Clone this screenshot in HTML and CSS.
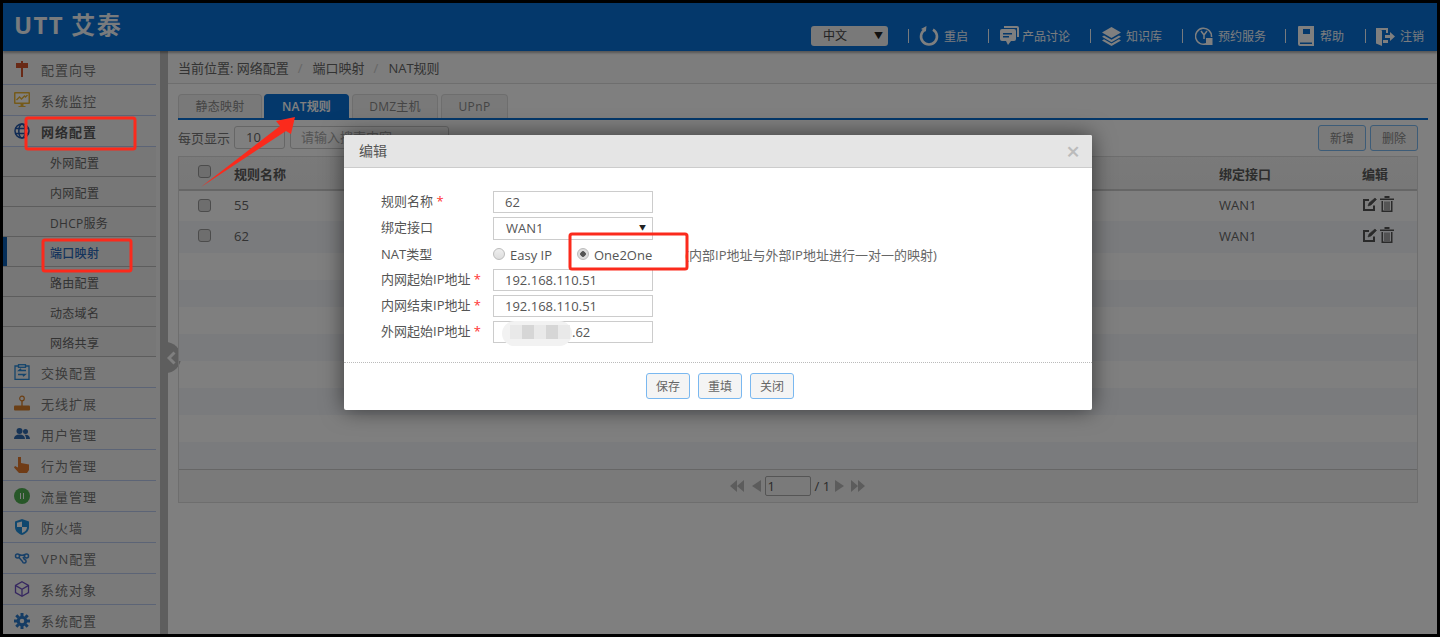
FILE: index.html
```html
<!DOCTYPE html>
<html lang="zh-CN">
<head>
    <meta charset="UTF-8">
    <meta name="viewport" content="width=device-width, initial-scale=1.0">
    <title>UTT 艾泰 - NAT规则</title>
    <link rel="stylesheet" href="styles.css">
</head>
<body>
<div class="app">
    <header class="topbar">
        <div class="logo">UTT 艾泰</div>
        <div class="top-tools">
            <div class="lang">中文<span class="caret">▼</span></div>
            <a class="tool tool-restart">
                <svg width="22" height="22" viewBox="0 0 22 22" fill="none" stroke="#fff" stroke-width="2.600"><path d="M7 4.600A8 8 0 1 0 15 4.600"/><path d="M8.500 1l-.6 5.600L3 4z" fill="#fff" stroke="none"/></svg>
                重启
            </a>
            <a class="tool tool-talk">
                <svg width="19" height="20" viewBox="0 0 19 20" fill="#fff"><path d="M4 0h13a2 2 0 0 1 2 2v9h-2V2H4z"/><path d="M2 3h12a2 2 0 0 1 2 2v8a2 2 0 0 1-2 2h-3l-3 4-2-4H2a2 2 0 0 1-2-2V5a2 2 0 0 1 2-2z"/><path d="M3 7h9v1.500H3zM3 10h6v1.500H3z" fill="#0870d6"/></svg>
                产品讨论
            </a>
            <a class="tool tool-know">
                <svg width="19" height="19" viewBox="0 0 19 19" fill="#fff"><path d="M9.500 0L19 5.500 9.500 11 0 5.500z"/><path d="M2 8.500l7.500 4.300L17 8.500l2 1.200-9.500 5.500L0 9.700z"/><path d="M2 12.300l7.500 4.300 7.500-4.300 2 1.200L9.500 19 0 13.500z"/></svg>
                知识库
            </a>
            <a class="tool tool-book">
                <svg width="18" height="20" viewBox="0 0 18 20" fill="none" stroke="#fff" stroke-width="1.500"><path d="M12 17.500A8 8 0 1 1 16.500 11"/><path d="M6 5l3 4 3-4M9 9v4"/><rect x="11" y="12" width="6.500" height="7" fill="#fff" stroke="none"/></svg>
                预约服务
            </a>
            <a class="tool tool-help">
                <svg width="16" height="20" viewBox="0 0 16 20" fill="#fff"><path d="M1 0h15v20H2a2 2 0 0 1-2-2V1a1 1 0 0 1 1-1zm1 16.500V18h12v-1.500z"/><rect x="5" y="3" width="7" height="5" fill="#0870d6"/></svg>
                帮助
            </a>
            <a class="tool tool-exit">
                <svg width="19" height="19" viewBox="0 0 19 19" fill="#fff"><path d="M0 1h12v5H10V3H5l-5-2zM0 1l6 2.500V19l-6-2.500zM10 13h2v3H7v-3z"/><path d="M9 8h5V5l5 4.500-5 4.500v-3H9z"/></svg>
                注销
            </a>
        </div>
    </header>

    <div class="layout">
        <aside class="sidebar">
            <ul class="menu">
                <li class="menu-item">
                    <svg class="menu-icon" viewBox="0 0 16 16" fill="#d2552c"><path d="M7 0h2v2h5v5H9v9H7V7H2V2h5z"/></svg>配置向导
                </li>
                <li class="menu-item">
                    <svg class="menu-icon" viewBox="0 0 16 16"><rect width="16" height="12" rx="1" fill="#eab534"/><rect x="1.500" y="1.500" width="13" height="9" fill="#fff"/><path d="M2.500 8l3-3 2 2 3-3 1 1 2-2" fill="none" stroke="#eab534" stroke-width="1.400"/><path d="M6.500 12h3v2h2v1h-7v-1h2z" fill="#eab534"/></svg>系统监控
                </li>
                <li class="menu-item menu-open">
                    <svg class="menu-icon" viewBox="0 0 16 16" fill="none" stroke="#1f55a8" stroke-width="1.500"><circle cx="8" cy="8" r="7"/><ellipse cx="8" cy="8" rx="3.200" ry="7"/><path d="M1 5.500h14M1 10.500h14"/></svg>网络配置
                </li>
                <li class="sub-item">外网配置</li>
                <li class="sub-item">内网配置</li>
                <li class="sub-item">DHCP服务</li>
                <li class="sub-item sub-active">端口映射</li>
                <li class="sub-item">路由配置</li>
                <li class="sub-item">动态域名</li>
                <li class="sub-item">网络共享</li>
                <li class="menu-item">
                    <svg class="menu-icon" viewBox="0 0 16 16" fill="none" stroke="#2a8ad8" stroke-width="1.300"><path d="M4.500 2H1v13.500h14V2h-3.500"/><rect x="4.500" y=".7" width="7" height="2.600"/><path d="M12 6.500H5l2-1.800M4 10.500h7l-2 1.800" stroke-width="1.500"/></svg>交换配置
                </li>
                <li class="menu-item">
                    <svg class="menu-icon" viewBox="0 0 16 16" fill="#d67f2a"><rect y="10.500" width="16" height="5" rx="1"/><rect x="7.300" y="5" width="1.400" height="6"/><circle cx="8" cy="3.500" r="2.300" fill="none" stroke="#d67f2a" stroke-width="1.200"/></svg>无线扩展
                </li>
                <li class="menu-item">
                    <svg class="menu-icon" viewBox="0 0 16 16" fill="#2f68ad"><circle cx="5.500" cy="5" r="3"/><circle cx="11.500" cy="5.500" r="2.500"/><path d="M0 13c0-3 2-4.500 5.500-4.500S11 10 11 13zM12 13c0-2-.5-3.200-1.500-4.200 3-.5 5.500 1 5.500 4.200z"/></svg>用户管理
                </li>
                <li class="menu-item">
                    <svg class="menu-icon" viewBox="0 0 16 16" fill="#e0782c"><path d="M4 0h3v6l8 1.500V13l-2 3H5L0 10.500l1-1.500 3 1.500z"/></svg>行为管理
                </li>
                <li class="menu-item">
                    <svg class="menu-icon" viewBox="0 0 16 16"><circle cx="8" cy="8" r="8" fill="#4fae50"/><path d="M6.500 5v6M9.500 5v6" stroke="#fff" stroke-width="1"/></svg>流量管理
                </li>
                <li class="menu-item">
                    <svg class="menu-icon" viewBox="0 0 16 16" fill="#1f8fdc"><path d="M8 0l7 2.500V8c0 4-3 6.500-7 8-4-1.500-7-4-7-8V2.500z"/><path d="M8 2.500v5.500h5C13 11 11 13 8 14V8H3V3.800z" fill="#fff"/></svg>防火墙
                </li>
                <li class="menu-item">
                    <svg class="menu-icon" viewBox="0 0 16 16" fill="none" stroke="#2f7fd0" stroke-width="1.500"><circle cx="3.500" cy="6" r="2"/><circle cx="12.500" cy="6" r="2"/><path d="M5 4.500c2 1 4 1 6 0M5 7.500l3.500 4a1.800 1.800 0 1 0 2-2L9 7"/></svg>VPN配置
                </li>
                <li class="menu-item">
                    <svg class="menu-icon" viewBox="0 0 16 16" fill="none" stroke="#6c4fc0" stroke-width="1.300"><path d="M8 .8l6.500 3.600v7.200L8 15.200l-6.500-3.600V4.400z"/><path d="M1.800 4.600L8 8.200l6.200-3.600M8 8.200v6.800"/></svg>系统对象
                </li>
                <li class="menu-item">
                    <svg class="menu-icon" viewBox="0 0 16 16" fill="none" stroke="#2a78c8" stroke-width="3"><circle cx="8" cy="8" r="3.800"/><path d="M8 0v3M8 13v3M0 8h3M13 8h3M2.300 2.300l2.200 2.200M11.500 11.500l2.200 2.200M13.700 2.300l-2.200 2.200M4.500 11.500l-2.200 2.200"/></svg>系统配置
                </li>
            </ul>
        </aside>
        <div class="side-strip"></div>
        <div class="collapse-btn"><svg width="9" height="14" viewBox="0 0 9 14" fill="none" stroke="#fff" stroke-width="3"><path d="M7.500 1.500L2 7l5.500 5.500"/></svg></div>

        <main class="main">
            <div class="breadcrumb">
                <span>当前位置: 网络配置</span><i>/</i><span>端口映射</span><i>/</i><span>NAT规则</span>
            </div>
            <div class="page">
                <div class="tabs">
                    <a class="tab tab-static">静态映射</a>
                    <a class="tab tab-nat tab-active">NAT规则</a>
                    <a class="tab tab-dmz">DMZ主机</a>
                    <a class="tab tab-upnp">UPnP</a>
                </div>
                <div class="panel">
                    <div class="toolbar">
                        <span class="per-page">每页显示</span>
                        <div class="page-size">10</div>
                        <div class="search">请输入搜索内容</div>
                        <div class="toolbar-btns">
                            <button class="btn-tool">新增</button>
                            <button class="btn-tool">删除</button>
                        </div>
                    </div>
                    <div class="grid">
                        <table>
                            <colgroup><col class="col-check"><col class="col-name"><col class="col-port"><col></colgroup>
                            <thead>
                                <tr><th><span class="check"></span></th><th>规则名称</th><th>绑定接口</th><th>编辑</th></tr>
                            </thead>
                            <tbody>
                                <tr class="row-first">
                                    <td><span class="check"></span></td><td>55</td><td>WAN1</td>
                                    <td class="ops">
                                        <svg width="15" height="15" viewBox="0 0 15 15" fill="none" stroke="#555" stroke-width="2"><path d="M12 8.500V13H2V3h5"/><path d="M6 9l1-3 6-5 1.500 1.500-5.500 5.500z" fill="#555" stroke-width=".6"/></svg>
                                        <svg width="14" height="16" viewBox="0 0 14 16" fill="#555"><path d="M0 2.500h14V4H0zM4.500 0h5v2h-5z"/><path d="M1.500 5H3v9.500h8V5h1.500v11h-11zM4.500 5.500h1V14h-1zM6.500 5.500h1V14h-1zM8.500 5.500h1V14h-1z"/></svg>
                                    </td>
                                </tr>
                                <tr class="row-second">
                                    <td><span class="check"></span></td><td>62</td><td>WAN1</td>
                                    <td class="ops">
                                        <svg width="15" height="15" viewBox="0 0 15 15" fill="none" stroke="#555" stroke-width="2"><path d="M12 8.500V13H2V3h5"/><path d="M6 9l1-3 6-5 1.500 1.500-5.500 5.500z" fill="#555" stroke-width=".6"/></svg>
                                        <svg width="14" height="16" viewBox="0 0 14 16" fill="#555"><path d="M0 2.500h14V4H0zM4.500 0h5v2h-5z"/><path d="M1.500 5H3v9.500h8V5h1.500v11h-11zM4.500 5.500h1V14h-1zM6.500 5.500h1V14h-1zM8.500 5.500h1V14h-1z"/></svg>
                                    </td>
                                </tr>
                                <tr><td colspan="4"></td></tr>
                                <tr><td colspan="4"></td></tr>
                                <tr><td colspan="4"></td></tr>
                                <tr><td colspan="4"></td></tr>
                                <tr><td colspan="4"></td></tr>
                                <tr><td colspan="4"></td></tr>
                                <tr><td colspan="4"></td></tr>
                                <tr><td colspan="4"></td></tr>
                            </tbody>
                        </table>
                        <div class="pager">
                            <svg width="14" height="12" viewBox="0 0 14 12" fill="#b8b8b8"><path d="M7 0v12L0 6zM14 0v12L7 6z"/></svg>
                            <svg class="pager-prev" width="10" height="12" viewBox="0 0 10 12" fill="#b8b8b8"><path d="M9 0v12L0 6z"/></svg>
                            <div class="page-input">1</div>
                            <span class="page-total">/ 1</span>
                            <svg width="10" height="12" viewBox="0 0 10 12" fill="#b8b8b8"><path d="M1 0v12l9-6z"/></svg>
                            <svg class="pager-last" width="14" height="12" viewBox="0 0 14 12" fill="#b8b8b8"><path d="M0 0v12l7-6zM7 0v12l7-6z"/></svg>
                        </div>
                    </div>
                </div>
            </div>
        </main>
    </div>

    <div class="overlay"></div>

    <section class="modal">
        <div class="modal-head">
            <span>编辑</span>
            <span class="modal-close">×</span>
        </div>
        <div class="modal-body">
            <div class="form-row">
                <label>规则名称 <em>*</em></label>
                <div class="field field-short">62</div>
            </div>
            <div class="form-row">
                <label>绑定接口</label>
                <div class="field field-select">WAN1<span class="caret">▼</span></div>
            </div>
            <div class="form-row form-radio">
                <label>NAT类型</label>
                <span class="radio"></span><span class="radio-text radio-easy">Easy IP</span>
                <span class="radio radio-on"></span><span class="radio-text">One2One</span>
                <span class="hint">(内部IP地址与外部IP地址进行一对一的映射)</span>
            </div>
            <div class="form-row">
                <label>内网起始IP地址 <em>*</em></label>
                <div class="field">192.168.110.51</div>
            </div>
            <div class="form-row">
                <label>内网结束IP地址 <em>*</em></label>
                <div class="field">192.168.110.51</div>
            </div>
            <div class="form-row">
                <label>外网起始IP地址 <em>*</em></label>
                <div class="field field-masked"><span class="mask"><b></b><b></b><b></b><b></b><b></b></span>.62</div>
            </div>
        </div>
        <div class="modal-foot">
            <button class="btn-modal">保存</button>
            <button class="btn-modal">重填</button>
            <button class="btn-modal">关闭</button>
        </div>
    </section>

    <!-- red marks drawn on the screenshot -->
    <svg class="marks" viewBox="3 3 1434 631" fill="none" stroke="#fb2a1c" stroke-width="3">
        <rect x="26" y="118" width="109" height="31" rx="2"/>
        <rect x="43" y="240" width="88" height="31" rx="2"/>
        <rect x="570" y="234" width="117" height="35" rx="2"/>
        <polygon points="295,117 276,121 280,126 201,187 286,131 291,134" fill="#fb2a1c" stroke="none"/>
    </svg>
</div>
</body>
</html>
```

FILE: styles.css
```css
* {
    margin: 0;
    padding: 0;
    box-sizing: border-box;
}

html, body {
    height: 100%;
    overflow: hidden;
}

body {
    background: #000;
    font-family: "Open Sans", "Noto Sans CJK SC", sans-serif;
    font-size: 13px;
    color: #666;
}

.app {
    position: relative;
    margin: 3px;
    height: 631px;
    overflow: hidden;
    background: #fff;
    display: flex;
    flex-direction: column;
}

/* top bar */
.topbar {
    height: 48px;
    flex: none;
    background: #0870d6;
    display: flex;
    justify-content: space-between;
    box-shadow: 0 2px 2px rgba(0, 0, 0, 0.3);
    position: relative;
    z-index: 1;
}

.logo {
    margin: 6px 0 0 11px;
    font-size: 24px;
    font-weight: 700;
    line-height: 32px;
    letter-spacing: 1.300px;
    color: #f2f6fa;
}

.top-tools {
    display: flex;
    align-items: center;
    padding: 18px 12px 0 0;
    font-size: 12px;
    color: #f4f8fc;
}

.lang {
    width: 77px;
    height: 20px;
    margin-right: 20px;
    padding: 0 5px 0 12px;
    border-radius: 3px;
    background: #f2f2f2;
    color: #444;
    font-size: 12px;
    line-height: 20px;
    display: flex;
    justify-content: space-between;
}

.caret {
    font-size: 9px;
    color: #222;
}

.tool {
    display: flex;
    align-items: center;
    gap: 5px;
    height: 22px;
    padding-left: 10px;
    position: relative;
    white-space: nowrap;
}

.tool::before {
    content: "";
    position: absolute;
    left: 0;
    top: 4px;
    height: 14px;
    width: 1px;
    background: #eef4fa;
}

.tool-restart { width: 60px; gap: 4px; }
.tool-talk { width: 102px; margin-left: 20px; padding-left: 12px; gap: 3px; }
.tool-know { width: 92px; padding-left: 12px; }
.tool-book { width: 103px; padding-left: 13px; }
.tool-help { width: 80px; padding-left: 13px; gap: 6px; }
.tool-exit { width: 60px; padding-left: 11px; }

/* body */
.layout {
    flex: 1;
    display: flex;
    position: relative;
    min-height: 0;
}

.sidebar {
    width: 157px;
    flex: none;
    background: #f4f4f4;
}

.menu {
    width: 153px;
    list-style: none;
    padding-top: 3px;
}

.menu-item {
    height: 31px;
    display: flex;
    align-items: center;
    padding-left: 11px;
    border-bottom: 1px solid #b9c9ec;
    letter-spacing: 1px;
    color: #777;
}

.menu-item:last-child {
    border-bottom: 0;
}

.menu-open {
    font-weight: 700;
    color: #5a5a5a;
}

.menu-icon {
    width: 16px;
    height: 16px;
    margin-right: 11px;
    flex: none;
}

.sub-item {
    height: 30px;
    line-height: 34px;
    padding-left: 47px;
    background: #eee;
    border-bottom: 1px solid #bbb;
    font-size: 12px;
    letter-spacing: 0.3px;
    color: #666;
}

.sub-active {
    color: #2a68b8;
    font-weight: 500;
    box-shadow: inset 4px 0 0 #0a5cb0;
}

.side-strip {
    width: 8px;
    flex: none;
    background: #bcbcbc;
}

.collapse-btn {
    position: absolute;
    left: 157px;
    top: 291px;
    width: 21px;
    height: 31px;
    border-radius: 0 16px 16px 0;
    background: #bcbcbc;
    display: flex;
    align-items: center;
    padding-left: 7px;
}

.main {
    flex: 1;
    min-width: 0;
    background: #fff;
}

.breadcrumb {
    height: 33px;
    padding-left: 10px;
    background: #fafafa;
    border-bottom: 1px solid #ddd;
    line-height: 35px;
    color: #666;
    font-size: 13px;
}

.breadcrumb i {
    margin: 0 10px 0 9px;
    font-style: normal;
    color: #ccc;
}

.page {
    padding: 10px 9px 0 10px;
}

.tabs {
    display: flex;
    height: 26px;
    border-bottom: 2px solid #0870d6;
}

.tab {
    height: 24px;
    border: 1px solid #ddd;
    border-bottom: 0;
    border-radius: 4px 4px 0 0;
    background: #f3f3f3;
    text-align: center;
    line-height: 24px;
    color: #8a8a8a;
    font-size: 12px;
    letter-spacing: 0.2px;
}

.tab-static { width: 84px; margin-right: 2px; }
.tab-nat { width: 85px; margin-right: 3px; }
.tab-dmz { width: 86px; margin-right: 3px; }
.tab-upnp { width: 67px; letter-spacing: 0.4px; }

.tab-active {
    background: #0870d6;
    border-color: #0870d6;
    color: #fff;
    font-weight: 600;
}

.panel {
    margin-right: 10px;
}

.toolbar {
    display: flex;
    align-items: center;
    height: 35px;
}

.per-page {
    width: 56px;
    color: #777;
}

.page-size {
    width: 51px;
    height: 23px;
    padding-left: 11px;
    border: 1px solid #ccc;
    border-radius: 3px;
    line-height: 21px;
}

.search {
    width: 159px;
    height: 23px;
    margin-left: 5px;
    padding-left: 10px;
    border: 1px solid #ccc;
    border-radius: 3px;
    line-height: 21px;
    color: #aaa;
}

.toolbar-btns {
    margin-left: auto;
    display: flex;
    gap: 4px;
}

.btn-tool {
    width: 48px;
    height: 26px;
    border: 1px solid #7ab8f0;
    border-radius: 3px;
    background: #f4f4f4;
    font: inherit;
    font-size: 12px;
    color: #888;
}

.grid {
    margin-top: 1px;
    border: 1px solid #ddd;
    height: 347px;
    position: relative;
}

table {
    width: 100%;
    border-collapse: collapse;
    table-layout: fixed;
}

.col-check { width: 55px; }
.col-name { width: 985px; }
.col-port { width: 143px; }

th {
    height: 33px;
    text-align: left;
    background: linear-gradient(#f4f4f4, #f0f0f0);
    border-bottom: 2px solid #ccc;
    font-weight: 600;
    color: #5a5a5a;
}

td {
    height: 27px;
    color: #666;
}

tbody tr:nth-child(even) {
    background: #f4f6fa;
}

.row-first td { height: 31px; padding-bottom: 2px; }
.row-second td { height: 32px; padding-bottom: 3px; }
.row-first .ops, .row-second .ops { padding-bottom: 6px; }

th:first-child,
td:first-child {
    padding-left: 19px;
}

th:first-child .check {
    margin-bottom: 3px;
}

.check {
    display: block;
    width: 13px;
    height: 13px;
    border: 1px solid #999;
    border-radius: 3px;
    background: #ddd;
}

.ops svg {
    vertical-align: middle;
}

.pager {
    position: absolute;
    left: 0;
    right: 0;
    bottom: 0;
    height: 33px;
    padding-right: 2px;
    background: #f4f4f4;
    border-top: 1px solid #ccc;
    display: flex;
    align-items: center;
    justify-content: center;
    color: #555;
}

.pager-prev { margin: 0 3px 0 8px; }
.pager-last { margin-left: 7px; }

.page-input {
    width: 46px;
    height: 20px;
    border: 1px solid #aaa;
    border-radius: 2px;
    padding-left: 2px;
    line-height: 18px;
}

.page-total {
    width: 23px;
    padding-left: 4px;
}

/* dialog */
.overlay {
    position: absolute;
    inset: 0;
    background: rgba(0, 0, 0, 0.5);
    z-index: 2;
}

.modal {
    position: absolute;
    left: 341px;
    top: 132px;
    width: 748px;
    height: 275px;
    background: #fff;
    border-radius: 2px;
    box-shadow: 0 0 22px rgba(0, 0, 0, 0.55);
    z-index: 3;
    font-size: 13px;
    color: #555;
}

.modal-head {
    height: 33px;
    padding: 0 12px 0 15px;
    background: #e5e5e5;
    border-bottom: 1px solid #ccc;
    display: flex;
    justify-content: space-between;
    line-height: 31px;
    font-size: 14px;
    border-radius: 2px 2px 0 0;
}

.modal-close {
    font-size: 24px;
    font-weight: 600;
    color: #bbb;
    line-height: 32px;
}

.modal-body {
    height: 195px;
    padding: 23px 0 0 37px;
    border-bottom: 1px dotted #bbb;
}

.form-row {
    display: flex;
    height: 26px;
    line-height: 21px;
}

.form-row label {
    width: 112px;
    flex: none;
}

.form-row em {
    font-style: normal;
    color: #f33;
}

.field {
    width: 160px;
    height: 22px;
    padding-left: 11px;
    border: 1px solid #ccc;
    line-height: 20px;
    color: #555;
    position: relative;
}

.field-select {
    height: 23px;
    padding: 0 6px 0 12px;
    display: flex;
    justify-content: space-between;
    font-size: 13px;
}

.field-select .caret {
    font-size: 7px;
}

.form-radio {
    line-height: 24px;
}

.form-radio label {
    line-height: 22px;
}

.radio {
    width: 12px;
    height: 12px;
    margin-top: 5px;
    border: 1px solid #bbb;
    border-radius: 50%;
    background: linear-gradient(#eee, #ddd);
    flex: none;
}

.radio-on {
    background: radial-gradient(circle, #555 0 2.500px, #ddd 3px);
}

.radio-text {
    margin-left: 5px;
}

.radio-easy {
    width: 67px;
}

.hint {
    margin-left: 33px;
    font-size: 13px;
    line-height: 24px;
    color: #666;
}

.field-masked {
    padding-left: 78px;
}

.mask {
    position: absolute;
    left: 8px;
    top: -1px;
    width: 70px;
    height: 25px;
    padding-left: 8px;
    display: flex;
    background: #f2f2f2;
    border-radius: 14px;
    filter: blur(0.6px);
}

.mask b {
    width: 12px;
    height: 14px;
    margin-top: 4px;
    background: #d6d6d6;
}

.mask b:nth-child(odd) {
    background: #e9e9e9;
}

.modal-foot {
    display: flex;
    justify-content: center;
    gap: 8px;
    padding-top: 10px;
    margin-left: 4px;
}

.btn-modal {
    width: 44px;
    height: 26px;
    border: 1px solid #7ab8f0;
    border-radius: 3px;
    background: #f4f4f4;
    font: inherit;
    font-size: 12px;
    color: #666;
}

.marks {
    position: absolute;
    left: 0;
    top: 0;
    width: 1434px;
    height: 631px;
    z-index: 4;
}
```
